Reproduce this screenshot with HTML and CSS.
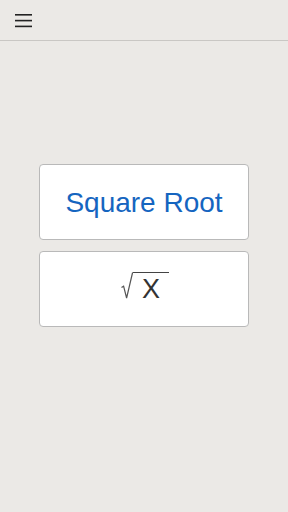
FILE: index.html
```html
<!DOCTYPE html>
<html lang="en">
<head>
  <meta charset="UTF-8">
  <meta name="viewport" content="width=device-width, initial-scale=1.0">
  <title>Square Root</title>
  <link rel="stylesheet" href="styles.css">
</head>
<body>

  <div class="top-bar">
    <button class="menu-button" aria-label="Menu">
      <svg width="18" height="14" viewBox="0 0 18 14">
        <rect x="0" y="0" width="17" height="1.6" fill="#222"/>
        <rect x="0" y="5.8" width="17" height="1.6" fill="#222"/>
        <rect x="0" y="11.6" width="17" height="1.6" fill="#222"/>
      </svg>
    </button>
  </div>

  <div class="content">
    <div class="card title-card">Square Root</div>
    <div class="card formula-card">
      <div class="formula">
        <svg class="radical" width="12" height="27" viewBox="0 0 12 27">
          <path d="M0.5 15.5 L2.6 14.2 L5.6 26 L11.6 0.5" fill="none" stroke="#555" stroke-width="1.2"/>
        </svg>
        <span class="radicand">X</span>
      </div>
    </div>
  </div>

</body>
</html>
```

FILE: styles.css
```css
body {
  margin: 0;
  font-family: "Liberation Sans", Arial, sans-serif;
  background-color: #ebe9e6;
  height: 512px;
}

.top-bar {
  height: 40px;
  border-bottom: 1px solid #c9c7c4;
  display: flex;
  align-items: center;
  padding-left: 15px;
}

.menu-button {
  background: none;
  border: none;
  padding: 0;
  margin-top: 1px;
  display: flex;
}

.content {
  display: flex;
  flex-direction: column;
  align-items: center;
  gap: 11px;
  padding-top: 123px;
}

.card {
  box-sizing: border-box;
  width: 210px;
  height: 76px;
  background-color: white;
  border: 1px solid #b9b9b9;
  border-radius: 4px;
  display: flex;
  align-items: center;
  justify-content: center;
}

.title-card {
  color: #1565c0;
  font-size: 28px;
  padding-top: 2px;
}

.formula {
  display: flex;
  align-items: flex-start;
  margin-bottom: 4px;
  margin-left: 2px;
}

.radical {
  display: block;
}

.radicand {
  font-size: 27px;
  line-height: 26px;
  color: #333;
  border-top: 1px solid #444;
  padding: 2.5px 9px 0 9px;
}
```
